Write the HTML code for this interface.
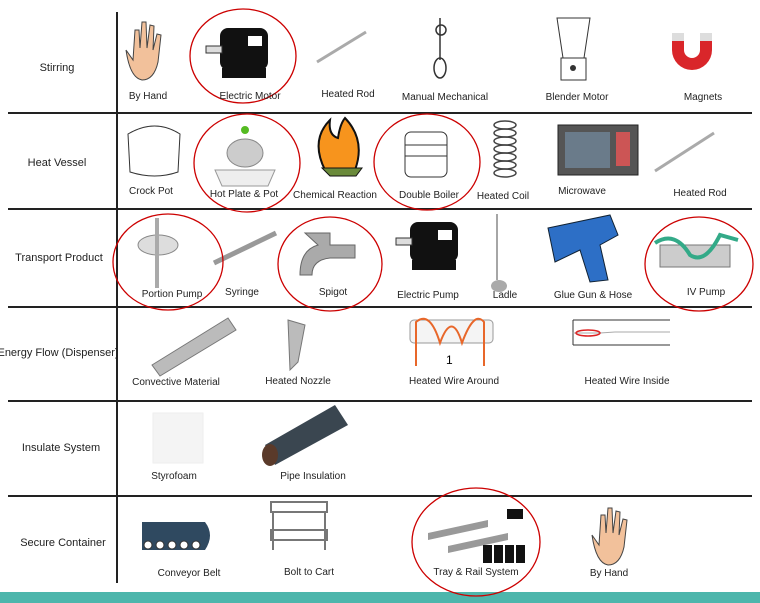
<!DOCTYPE html>
<html><head><meta charset="utf-8"><style>
html,body{margin:0;padding:0;background:#fff;}
#c{position:relative;width:760px;height:603px;overflow:hidden;font-family:"Liberation Sans",sans-serif;color:#222;}
.t{position:absolute;font-size:10px;white-space:nowrap;transform:translateX(-50%);}
.l{position:absolute;font-size:11px;white-space:nowrap;transform:translate(-50%,-50%);}
svg{position:absolute;left:0;top:0;}
</style></head><body><div id="c">
<svg width="760" height="603">
<g stroke="#222" stroke-width="2">
<line x1="117" y1="12" x2="117" y2="583"/>
<line x1="8" y1="113" x2="752" y2="113"/>
<line x1="8" y1="209" x2="752" y2="209"/>
<line x1="8" y1="307" x2="752" y2="307"/>
<line x1="8" y1="401" x2="752" y2="401"/>
<line x1="8" y1="496" x2="752" y2="496"/>
</g>
<rect x="0" y="592" width="760" height="11" fill="#4db6ac"/>
<!-- hands -->
<path d="M126 50 L133 60 L135 30 L139 30 L140 48 L142 22 L146 22 L147 48 L150 25 L154 26 L153 50 L157 34 L161 35 L158 62 Q154 80 142 80 Q130 78 126 50Z" fill="#f2c19b" stroke="#444"/>
<path d="M592 535 L599 545 L601 515 L605 515 L606 533 L608 508 L612 508 L613 533 L616 511 L620 512 L619 535 L623 519 L627 520 L624 547 Q620 565 608 565 Q596 563 592 535Z" fill="#f2c19b" stroke="#444"/>
<!-- motors -->
<g fill="#111"><rect x="220" y="28" width="48" height="42" rx="8"/><rect x="206" y="46" width="16" height="7" fill="#ddd" stroke="#333"/><rect x="222" y="68" width="44" height="10"/></g>
<rect x="248" y="36" width="14" height="10" fill="#fff"/>
<g fill="#111"><rect x="410" y="222" width="48" height="40" rx="8"/><rect x="396" y="238" width="16" height="7" fill="#ddd" stroke="#333"/><rect x="412" y="260" width="44" height="10"/></g>
<rect x="438" y="230" width="14" height="10" fill="#fff"/>
<!-- rods -->
<line x1="317" y1="62" x2="366" y2="32" stroke="#aaa" stroke-width="3"/>
<line x1="655" y1="171" x2="714" y2="133" stroke="#aaa" stroke-width="3"/>
<!-- manual mixer -->
<g stroke="#333" fill="none" stroke-width="1.5"><circle cx="441" cy="30" r="5"/><line x1="440" y1="18" x2="440" y2="60"/><ellipse cx="440" cy="68" rx="6" ry="10"/></g>
<!-- blender -->
<path d="M557 18 L590 18 L584 58 L563 58Z" fill="#fff" stroke="#333"/><rect x="561" y="58" width="25" height="22" fill="#fff" stroke="#333"/><circle cx="573" cy="68" r="3" fill="#333"/>
<!-- magnet -->
<path d="M672 35 L672 50 A20 20 0 0 0 712 50 L712 35 L700 35 L700 50 A8 8 0 0 1 684 50 L684 35Z" fill="#d9262a"/>
<rect x="672" y="33" width="12" height="8" fill="#ddd"/><rect x="700" y="33" width="12" height="8" fill="#ddd"/>
<!-- crock pot -->
<path d="M128 134 Q155 118 180 134 L178 172 Q155 180 130 172Z" fill="#fff" stroke="#333"/>
<!-- hot plate -->
<path d="M215 170 L275 170 L268 186 L222 186Z" fill="#eee" stroke="#999"/><ellipse cx="245" cy="153" rx="18" ry="14" fill="#ccc" stroke="#888"/><circle cx="245" cy="130" r="4" fill="#5b2"/>
<!-- fire -->
<path d="M325 170 Q310 140 330 120 Q328 135 338 138 Q340 124 345 118 Q366 140 355 170Z" fill="#f7941d" stroke="#111" stroke-width="2"/>
<path d="M322 168 L362 168 L356 176 L330 176Z" fill="#6a8a3a" stroke="#111"/>
<!-- double boiler -->
<rect x="405" y="132" width="42" height="45" rx="6" fill="#fff" stroke="#333"/><line x1="405" y1="145" x2="447" y2="145" stroke="#333"/><line x1="405" y1="156" x2="447" y2="156" stroke="#333"/>
<!-- coil -->
<g fill="none" stroke="#444" stroke-width="1.5"><ellipse cx="505" cy="125" rx="11" ry="4"/><ellipse cx="505" cy="133" rx="11" ry="4"/><ellipse cx="505" cy="141" rx="11" ry="4"/><ellipse cx="505" cy="149" rx="11" ry="4"/><ellipse cx="505" cy="157" rx="11" ry="4"/><ellipse cx="505" cy="165" rx="11" ry="4"/><ellipse cx="505" cy="173" rx="11" ry="4"/></g>
<!-- microwave -->
<rect x="558" y="125" width="80" height="50" fill="#555" stroke="#222"/><rect x="565" y="132" width="45" height="36" fill="#6a7b8a"/><rect x="616" y="132" width="14" height="34" fill="#c55"/>
<!-- portion pump -->
<ellipse cx="158" cy="245" rx="20" ry="10" fill="#ddd" stroke="#888"/><rect x="155" y="218" width="4" height="70" fill="#aaa"/>
<!-- syringe -->
<line x1="214" y1="263" x2="276" y2="233" stroke="#999" stroke-width="5"/>
<!-- spigot -->
<path d="M305 233 L330 233 L330 245 L355 245 L355 258 L330 258 Q312 260 312 275 L300 275 Q300 250 318 245Z" fill="#aaa" stroke="#666"/>
<!-- ladle -->
<path d="M497 214 L497 280" stroke="#888" stroke-width="1.5"/><ellipse cx="499" cy="286" rx="8" ry="6" fill="#aaa"/>
<!-- glue gun -->
<path d="M548 228 L610 215 L618 235 L600 245 L608 280 L590 282 L580 250 L555 262 Z" fill="#2d6fc6" stroke="#123"/>
<!-- iv pump -->
<rect x="660" y="245" width="70" height="22" fill="#ccc" stroke="#777"/><path d="M655 243 Q675 230 690 255 Q705 265 720 235 L738 240" stroke="#3a8" stroke-width="4" fill="none"/>
<!-- ellipses -->
<g fill="none" stroke="#c00" stroke-width="1.3">
<ellipse cx="243" cy="56" rx="53" ry="47"/>
<ellipse cx="247" cy="163" rx="53" ry="49"/>
<ellipse cx="427" cy="162" rx="53" ry="48"/>
<ellipse cx="168" cy="262" rx="55" ry="48"/>
<ellipse cx="330" cy="264" rx="52" ry="47"/>
<ellipse cx="699" cy="264" rx="54" ry="47"/>
<ellipse cx="476" cy="542" rx="64" ry="54"/>
</g>
<!-- energy flow -->
<path d="M152 365 L228 318 L236 330 L160 376Z" fill="#bbb" stroke="#777"/>
<path d="M288 320 L305 325 L298 362 L290 370Z" fill="#bbb" stroke="#777"/>
<rect x="410" y="320" width="83" height="23" rx="4" fill="#f4f4f4" stroke="#999"/>
<path d="M416 366 L416 322 Q430 310 440 343 Q452 310 462 343 Q474 310 484 322 L484 366" stroke="#e8672a" stroke-width="2" fill="none"/>
<text x="446" y="364" font-size="12" font-family="Liberation Sans">1</text>
<path d="M573 320 L670 320 M573 345 L670 345 M573 320 L573 345" stroke="#333" fill="none"/>
<path d="M572 333 L600 333 L615 332 L670 332" stroke="#aaa" fill="none"/><ellipse cx="588" cy="333" rx="12" ry="3" fill="none" stroke="#d22" stroke-width="1.5"/>
<!-- insulation -->
<rect x="153" y="413" width="50" height="50" fill="#f4f4f4" stroke="#eee"/>
<path d="M265 445 L335 405 L348 425 L275 465Z" fill="#3a4650"/><ellipse cx="270" cy="455" rx="8" ry="11" fill="#5a3a2a"/>
<!-- secure -->
<path d="M142 522 L205 522 Q215 535 205 550 L142 550Z" fill="#2f4960"/>
<g fill="#fff" stroke="#333"><circle cx="148" cy="545" r="4"/><circle cx="160" cy="545" r="4"/><circle cx="172" cy="545" r="4"/><circle cx="184" cy="545" r="4"/><circle cx="196" cy="545" r="4"/></g>
<g fill="none" stroke="#777" stroke-width="2"><rect x="271" y="502" width="56" height="10"/><rect x="271" y="530" width="56" height="10"/><line x1="273" y1="512" x2="273" y2="550"/><line x1="325" y1="512" x2="325" y2="550"/></g>
<path d="M428 533 L488 520 L488 527 L428 540Z M448 546 L508 533 L508 540 L448 553Z" fill="#999"/>
<g fill="#111"><rect x="483" y="545" width="9" height="18"/><rect x="494" y="545" width="9" height="18"/><rect x="505" y="545" width="9" height="18"/><rect x="516" y="545" width="9" height="18"/><rect x="507" y="509" width="16" height="10"/></g>
</svg>
<div class="l" style="left:57px;top:68px">Stirring</div>
<div class="l" style="left:57px;top:163px">Heat Vessel</div>
<div class="l" style="left:59px;top:258px">Transport Product</div>
<div class="l" style="left:58px;top:353px">Energy Flow (Dispenser)</div>
<div class="l" style="left:61px;top:448px">Insulate System</div>
<div class="l" style="left:63px;top:543px">Secure Container</div>

<div class="t" style="left:148px;top:91px">By Hand</div>
<div class="t" style="left:250px;top:91px">Electric Motor</div>
<div class="t" style="left:348px;top:89px">Heated Rod</div>
<div class="t" style="left:445px;top:92px">Manual Mechanical</div>
<div class="t" style="left:577px;top:92px">Blender Motor</div>
<div class="t" style="left:703px;top:92px">Magnets</div>

<div class="t" style="left:151px;top:186px">Crock Pot</div>
<div class="t" style="left:244px;top:189px">Hot Plate &amp; Pot</div>
<div class="t" style="left:335px;top:190px">Chemical Reaction</div>
<div class="t" style="left:429px;top:190px">Double Boiler</div>
<div class="t" style="left:503px;top:191px">Heated Coil</div>
<div class="t" style="left:582px;top:186px">Microwave</div>
<div class="t" style="left:700px;top:188px">Heated Rod</div>

<div class="t" style="left:172px;top:289px">Portion Pump</div>
<div class="t" style="left:242px;top:287px">Syringe</div>
<div class="t" style="left:333px;top:287px">Spigot</div>
<div class="t" style="left:428px;top:290px">Electric Pump</div>
<div class="t" style="left:505px;top:290px">Ladle</div>
<div class="t" style="left:593px;top:290px">Glue Gun &amp; Hose</div>
<div class="t" style="left:706px;top:287px">IV Pump</div>

<div class="t" style="left:176px;top:377px">Convective Material</div>
<div class="t" style="left:298px;top:376px">Heated Nozzle</div>
<div class="t" style="left:454px;top:376px">Heated Wire Around</div>
<div class="t" style="left:627px;top:376px">Heated Wire Inside</div>

<div class="t" style="left:174px;top:471px">Styrofoam</div>
<div class="t" style="left:313px;top:471px">Pipe Insulation</div>

<div class="t" style="left:189px;top:568px">Conveyor Belt</div>
<div class="t" style="left:309px;top:567px">Bolt to Cart</div>
<div class="t" style="left:476px;top:567px">Tray &amp; Rail System</div>
<div class="t" style="left:609px;top:568px">By Hand</div>
</div></body></html>
